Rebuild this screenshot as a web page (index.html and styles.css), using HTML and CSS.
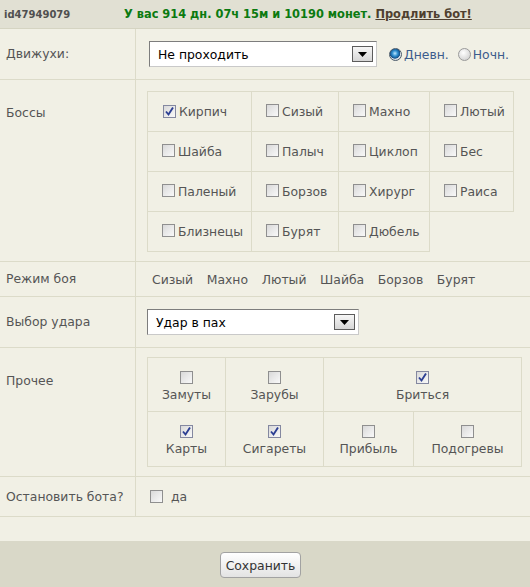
FILE: index.html
```html
<!DOCTYPE html>
<html lang="ru">
<head>
<meta charset="utf-8">
<title>Настройки бота</title>
<link rel="stylesheet" href="styles.css">
</head>
<body>
<div class="page">
  <div class="top">
    <span class="uid">id47949079</span>
    <span class="info">У вас 914 дн. 07ч 15м и 10190 монет. <a class="ext" href="#">Продлить бот!</a></span>
  </div>

  <div class="row r-moves">
    <div class="lbl">Движухи:</div>
    <div class="val v-moves">
      <div class="select s-wide"><span class="sel-text">Не проходить</span><span class="sel-btn"><svg width="9" height="5" viewBox="0 0 9 5"><path d="M0 0H9L4.5 5Z" fill="#000"/></svg></span></div>
      <label class="radio"><span class="rb on"></span>Дневн.</label>
      <label class="radio"><span class="rb"></span>Ночн.</label>
    </div>
  </div>

  <div class="row r-boss">
    <div class="lbl lbl-top">Боссы</div>
    <div class="val v-boss">
      <table class="grid boss">
        <tr>
          <td class="c1"><span class="cb on"><svg width="11" height="11" viewBox="0 0 11 11"><path d="M2 5.5L4.5 8.5L9 1.5" fill="none" stroke="#2c3f93" stroke-width="1.9"/></svg></span>Кирпич</td>
          <td class="c2"><span class="cb"></span>Сизый</td>
          <td class="c3"><span class="cb"></span>Махно</td>
          <td class="c4"><span class="cb"></span>Лютый</td>
        </tr>
        <tr>
          <td><span class="cb"></span>Шайба</td>
          <td><span class="cb"></span>Палыч</td>
          <td><span class="cb"></span>Циклоп</td>
          <td><span class="cb"></span>Бес</td>
        </tr>
        <tr>
          <td><span class="cb"></span>Паленый</td>
          <td><span class="cb"></span>Борзов</td>
          <td><span class="cb"></span>Хирург</td>
          <td><span class="cb"></span>Раиса</td>
        </tr>
        <tr>
          <td><span class="cb"></span>Близнецы</td>
          <td><span class="cb"></span>Бурят</td>
          <td><span class="cb"></span>Дюбель</td>
        </tr>
      </table>
    </div>
  </div>

  <div class="row r-mode">
    <div class="lbl">Режим боя</div>
    <div class="val v-mode">
      <span>Сизый</span><span>Махно</span><span>Лютый</span><span>Шайба</span><span>Борзов</span><span>Бурят</span>
    </div>
  </div>

  <div class="row r-hit">
    <div class="lbl">Выбор удара</div>
    <div class="val v-hit">
      <div class="select s-hit"><span class="sel-text">Удар в пах</span><span class="sel-btn"><svg width="9" height="5" viewBox="0 0 9 5"><path d="M0 0H9L4.5 5Z" fill="#000"/></svg></span></div>
    </div>
  </div>

  <div class="row r-misc">
    <div class="lbl lbl-top">Прочее</div>
    <div class="val v-misc">
      <table class="grid misc">
        <tr class="m1">
          <td class="k1"><span class="cb"></span><span class="t">Замуты</span></td>
          <td class="k2"><span class="cb"></span><span class="t">Зарубы</span></td>
          <td colspan="2"><span class="cb on"><svg width="11" height="11" viewBox="0 0 11 11"><path d="M2 5.5L4.5 8.5L9 1.5" fill="none" stroke="#2c3f93" stroke-width="1.9"/></svg></span><span class="t">Бриться</span></td>
        </tr>
        <tr class="m2">
          <td><span class="cb on"><svg width="11" height="11" viewBox="0 0 11 11"><path d="M2 5.5L4.5 8.5L9 1.5" fill="none" stroke="#2c3f93" stroke-width="1.9"/></svg></span><span class="t">Карты</span></td>
          <td><span class="cb on"><svg width="11" height="11" viewBox="0 0 11 11"><path d="M2 5.5L4.5 8.5L9 1.5" fill="none" stroke="#2c3f93" stroke-width="1.9"/></svg></span><span class="t">Сигареты</span></td>
          <td class="k3"><span class="cb"></span><span class="t">Прибыль</span></td>
          <td class="k4"><span class="cb"></span><span class="t">Подогревы</span></td>
        </tr>
      </table>
    </div>
  </div>

  <div class="row r-stop">
    <div class="lbl">Остановить бота?</div>
    <div class="val v-stop"><span class="cb"></span><span class="yes">да</span></div>
  </div>

  <div class="spacer"></div>

  <div class="foot">
    <button class="save" type="button">Сохранить</button>
  </div>
</div>
</body>
</html>
```

FILE: styles.css
```css
html, body {
  margin: 0;
  padding: 0;
}
body {
  background: #f1f0e5;
  font-family: "DejaVu Sans", Verdana, sans-serif;
  font-size: 12.4px;
  color: #555;
}
.page {
  width: 530px;
}
.top {
  height: 28px;
  background: #e1e0d3;
  border-bottom: 1px solid #d5d4c2;
  display: flex;
  align-items: center;
  font-weight: bold;
}
.uid {
  width: 120px;
  padding-left: 4px;
  font-size: 10px;
  color: #505050;
}
.info {
  font-size: 11.4px;
  color: #0b7a10;
}
.ext {
  color: #4f3f2f;
  text-decoration: underline;
}
.row {
  display: flex;
  border-bottom: 1px solid #dcdbc9;
}
.lbl {
  width: 129px;
  padding-left: 6px;
  border-right: 1px solid #dcdbc9;
  display: flex;
  align-items: center;
  line-height: 16px;
}
.lbl-top {
  align-items: flex-start;
  padding-top: 25px;
}
.val {
  flex: 1;
  display: flex;
  align-items: center;
}

/* select */
.select {
  box-sizing: border-box;
  height: 26px;
  border: 1px solid;
  border-color: #7d7d7d #c9c9c9 #c9c9c9 #7d7d7d;
  background: #fff;
  display: flex;
  align-items: center;
  justify-content: space-between;
  padding: 0 3px 0 8px;
  color: #000;
}
.s-wide { width: 228px; }
.s-hit { width: 212px; }
.sel-btn {
  width: 19px;
  height: 14px;
  border: 1px solid #5c5c5c;
  background: linear-gradient(#f6f6f6, #d6d6d6);
  display: flex;
  align-items: center;
  justify-content: center;
}
.sel-btn svg { display: block; }

/* radios */
.radio {
  display: flex;
  align-items: center;
  color: #3c5c8c;
}
.v-moves {
  padding: 12px 0 12px 13px;
}
.v-moves .radio:first-of-type { margin-left: 12px; }
.v-moves .radio + .radio { margin-left: 9px; }
.rb {
  width: 11px;
  height: 11px;
  border-radius: 50%;
  border: 1px solid #9a9a9a;
  background: radial-gradient(circle at 40% 35%, #ffffff 0, #e6e6e6 45%, #c8c8c8 100%);
  margin-right: 2px;
}
.rb.on {
  border-color: #4a5a6a;
  background: radial-gradient(circle at 45% 40%, #bfe6ff 0, #2f8fd0 30%, #14508a 55%, #dfe4ea 62%, #c3c7cc 100%);
}

/* checkbox */
.cb {
  display: inline-flex;
  align-items: center;
  justify-content: center;
  width: 11px;
  height: 11px;
  border: 1px solid #8f8f8f;
  background: linear-gradient(135deg, #d9d9d9, #f9f9f9);
  vertical-align: -1px;
  margin-right: 3px;
  box-sizing: content-box;
}
.cb.on { border-color: #8488a0; }
.cb svg { display: block; }

/* boss grid */
.v-boss {
  align-items: flex-start;
  padding: 11px 0 9px 11px;
}
.grid {
  border-collapse: collapse;
}
.grid td {
  border: 1px solid #dcdbc9;
  padding: 0;
}
.boss td {
  height: 40px;
  padding-left: 14px;
  box-sizing: border-box;
  white-space: nowrap;
}
.boss .c1 { width: 104px; padding-left: 15px; }
.boss .c2 { width: 87px; }
.boss .c3 { width: 91px; }
.boss .c4 { width: 84px; }

/* mode */
.r-mode { height: 34px; }
.v-mode {
  padding-left: 16px;
  gap: 13.6px;
}

/* hit */
.v-hit {
  padding: 12px 0 12px 11px;
}

/* misc grid */
.v-misc {
  align-items: flex-start;
  padding: 9px 0 9px 11px;
}
.misc td {
  text-align: center;
  vertical-align: top;
  box-sizing: border-box;
}
.misc .m1 td { height: 54px; padding-top: 13px; }
.misc .m2 td { height: 55px; padding-top: 13px; }
.misc .cb { display: flex; margin: 0 auto; }
.misc .t { display: block; margin-top: 3px; line-height: 16px; }
.misc .k1 { width: 78px; }
.misc .k2 { width: 98px; }
.misc .k3 { width: 90px; }
.misc .k4 { width: 108px; }

/* stop */
.r-stop { height: 39px; }
.v-stop { padding-left: 14px; }
.v-stop .cb { margin-right: 8px; }

.spacer {
  height: 24px;
}
.foot {
  height: 46px;
  background: #d9d8c8;
  display: flex;
  align-items: flex-start;
  justify-content: center;
  padding-right: 9px;
  box-sizing: border-box;
  padding-top: 11px;
}
.save {
  width: 81px;
  height: 26px;
  border: 1px solid #a2a2a2;
  border-radius: 4px;
  background: linear-gradient(#ffffff, #e3e3e3);
  font-family: "DejaVu Sans", Verdana, sans-serif;
  font-size: 12.4px;
  color: #333;
  padding: 0;
}
```
